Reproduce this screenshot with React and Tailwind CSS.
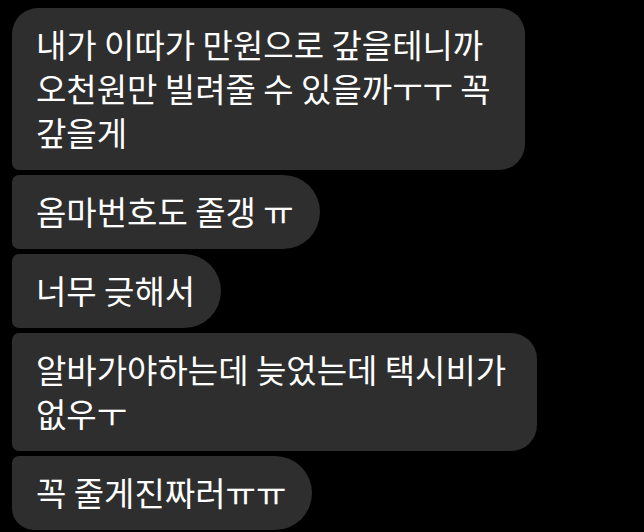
const messages = [
  {
    lines: ["내가 이따가 만원으로 갚을테니까", "오천원만 빌려줄 수 있을까ㅜㅜ 꼭", "갚을게"],
    box: "w-[513px] rounded-tl-[26px] rounded-bl-[7px] rounded-r-[26px]",
  },
  {
    lines: ["옴마번호도 줄갱 ㅠ"],
    box: "w-fit pr-[26px] rounded-l-[7px] rounded-r-[37px]",
  },
  {
    lines: ["너무 긎해서"],
    box: "w-fit pr-[26px] rounded-l-[7px] rounded-r-[37px]",
  },
  {
    lines: ["알바가야하는데 늦었는데 택시비가", "없우ㅜ"],
    box: "w-[525px] rounded-l-[7px] rounded-r-[26px]",
  },
  {
    lines: ["꼭 줄게진짜러ㅠㅠ"],
    box: "w-fit pr-[26px] rounded-tl-[7px] rounded-bl-[22px] rounded-r-[37px]",
  },
];

const Bubble = (props) => {
  return (
    <div
      className={
        "bg-[#2e2e2e] text-white pl-[24px] pt-[14px] pb-[16px] text-[33px] leading-[44px] whitespace-nowrap " +
        props.box
      }
    >
      {props.lines.map((line, i) => (
        <div key={i}>{line}</div>
      ))}
    </div>
  );
};

export default function App() {
  return (
    <div
      className="w-[644px] h-[532px] bg-black overflow-hidden pt-[8px] pl-[12px] flex flex-col gap-[5px]"
      style={{ fontFamily: '"Noto Sans CJK KR", "Noto Sans", sans-serif' }}
    >
      {messages.map((m, i) => (
        <Bubble key={i} lines={m.lines} box={m.box} />
      ))}
    </div>
  );
}
